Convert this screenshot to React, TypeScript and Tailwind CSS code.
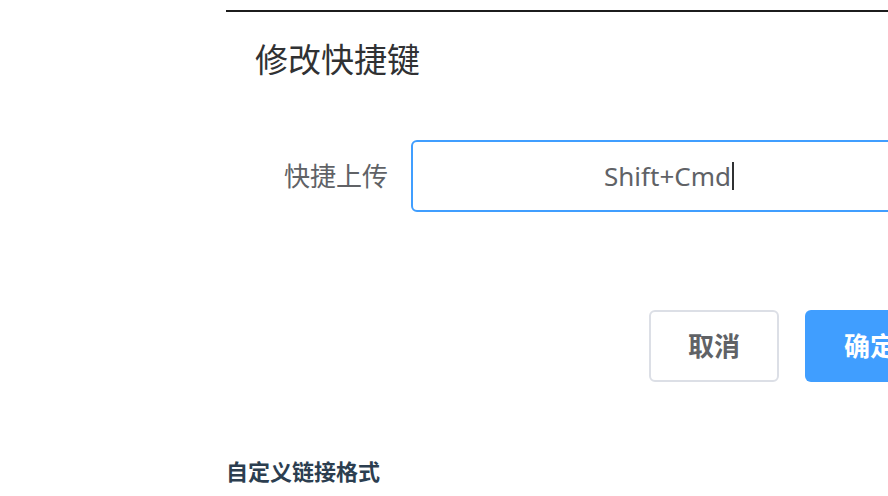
const cjk = "font-['Noto_Sans','Noto_Sans_CJK_SC',sans-serif]";

function ShortcutDialog() {
  return (
    <div className="w-[720px] h-[400px] border-t-2 border-[#1c1c1c] bg-white">
      <div className="pl-[29px] pt-[28px] h-[76px]">
        <h2 className="text-[33px] leading-[40px] text-[#303133]">修改快捷键</h2>
      </div>
      <div className="flex items-center mt-[52px]">
        <label className="w-[162px] text-right text-[26px] text-[#606266] leading-[72px]">快捷上传</label>
        <div className="ml-[23px] w-[516px] h-[72px] rounded-[6px] border-2 border-[#409eff] flex items-center justify-center">
          <span className="text-[26px] text-[#606266]">Shift+Cmd</span>
          <span className="w-[2px] h-[28px] bg-[#303133] ml-[1px]" />
        </div>
      </div>
      <div className="flex mt-[98px] pl-[423px] gap-[26px]">
        <button className="w-[130px] h-[72px] rounded-[6px] border-2 border-[#dcdfe6] bg-white text-[26px] font-bold text-[#606266]">
          取消
        </button>
        <button className="w-[130px] h-[72px] rounded-[6px] bg-[#409eff] text-[26px] font-bold text-white">
          确定
        </button>
      </div>
    </div>
  );
}

export default function App() {
  return (
    <div className={`w-[888px] h-[496px] overflow-hidden bg-white pl-[226px] pt-[10px] ${cjk}`}>
      <ShortcutDialog />
      <h3 className="mt-[46px] text-[22px] font-bold leading-[30px] text-[#2c3e50]">自定义链接格式</h3>
    </div>
  );
}
